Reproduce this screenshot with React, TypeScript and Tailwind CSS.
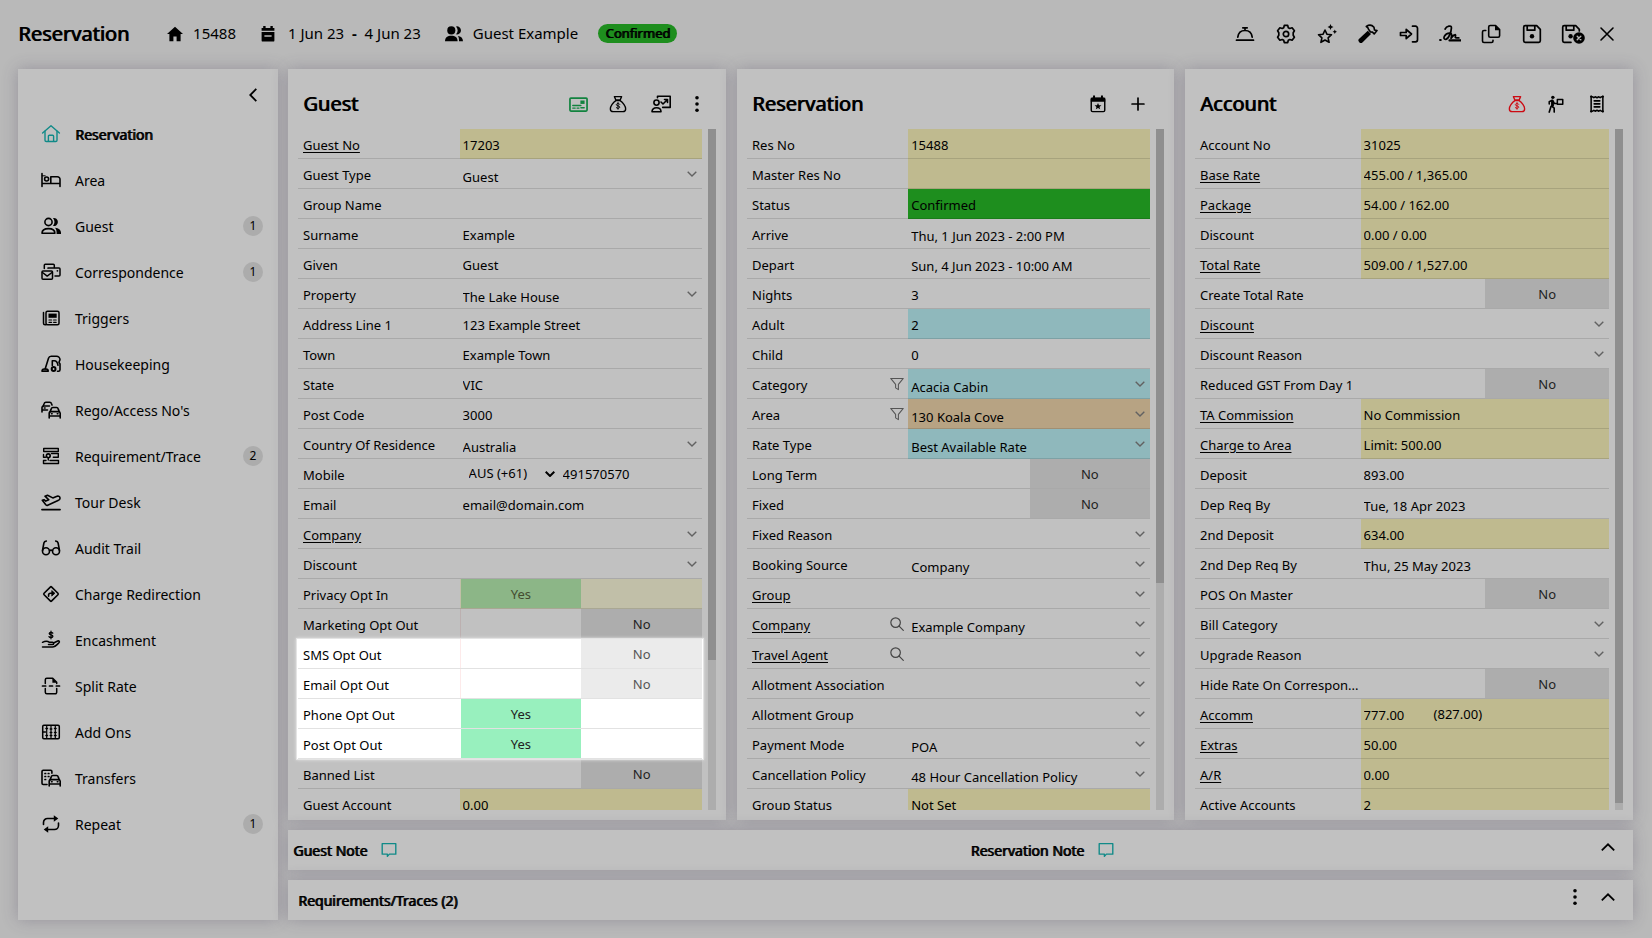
import React, { useId, useState } from 'react';
import clsx from 'clsx';

/* ---------- icons ---------- */

interface IconProps {
  className?: string;
  stroke?: number;
  children: React.ReactNode;
}

const Icon: React.FC<IconProps> = ({ className = 'size-5', stroke = 1.4, children }) => (
  <svg
    viewBox="0 0 20 20"
    className={clsx('shrink-0', className)}
    fill="none"
    stroke="currentColor"
    strokeWidth={stroke}
    strokeLinecap="round"
    strokeLinejoin="round"
    aria-hidden="true"
  >
    {children}
  </svg>
);

const solid = { fill: 'currentColor', stroke: 'none' };

const HomeOutline = () => (
  <Icon className="size-5 text-[#108a88]">
    <path d="M1.6 9 10 1.8 18.4 9" />
    <path d="M4 7.2v9a1.3 1.3 0 0 0 1.3 1.3h9.4a1.3 1.3 0 0 0 1.3-1.3v-9" />
    <path d="M7.4 17.3v-5a1 1 0 0 1 1-1h3.2a1 1 0 0 1 1 1v5" />
  </Icon>
);

const Bed = () => (
  <Icon stroke={1.6}>
    <path d="M1 3.5v13M1 13.5h18M19 16.5V9.3a2.6 2.6 0 0 0-2.6-2.6H9.8v6.6" />
    <circle cx="5.6" cy="9" r="2" />
    <path d="M1.2 5.8h3" strokeWidth={1} />
  </Icon>
);

const People = () => (
  <Icon stroke={1.6}>
    <circle cx="7.5" cy="6" r="3.6" />
    <path d="M1 17.3c0-3 2.6-4.7 6.5-4.7s6.4 1.7 6.4 4.7z" />
    <path d="M12 2.1a4 4 0 1 1 0 7.8 6.4 6.4 0 0 0 0-7.8z" {...solid} />
    <path d="M14 11.7c3.6.3 6 2.3 6 5v1.4h-4.4c.2-2.6-.2-4.8-1.6-6.4z" {...solid} />
  </Icon>
);

const Letters = () => (
  <Icon stroke={1.5}>
    <rect x="1" y="9" width="10.5" height="8.3" rx="1" />
    <path d="m1.5 10.5 4.700 3.600 4.800-3.600" />
    <path d="M3.300 6.500V3.200a1 1 0 0 1 1-1h8a1 1 0 0 1 1 1v2.300" />
    <path d="M7 6.300V6h11a1 1 0 0 1 1 1v6a1 1 0 0 1-1 1h-4" />
    <circle cx="16.400" cy="8.800" r="0.900" {...solid} />
  </Icon>
);

const Newspaper = () => (
  <Icon stroke={1.5}>
    <rect x="5" y="3.2" width="13" height="13.6" rx="1.5" />
    <path d="M5 16.8H4a1.5 1.5 0 0 1-1.5-1.5V4.6" />
    <rect x="7.500" y="5.600" width="8.200" height="4.200" {...solid} />
    <path d="M8 12h2.600M12.600 12h2.600M8 14.300h2.600M12.600 14.300h2.600" strokeWidth={1.2} />
  </Icon>
);

const Vacuum = () => (
  <Icon stroke={1.6}>
    <path d="M1 17.300c0-1.600.8-2.300 2.200-2.300h2c1.200 0 2 .8 2 2.300z" fill="currentColor" fillOpacity={0.5} />
    <path d="M4.300 14.600 7.500 4.300a2.800 2.800 0 0 1 2.700-2H15.500A3.500 3.500 0 0 1 19 5.800l-1 2.500 1 1.700v5.800a1.500 1.500 0 0 1-1.500 1.500h-1" />
    <path d="M11.300 11.500V6.800h2c2 0 3.200 1.500 3.700 4.500" />
    <circle cx="12.600" cy="15" r="1.900" strokeWidth={2} />
  </Icon>
);

const Car = () => (
  <>
    <path d="m9.200 11.600 1.100-3a1.600 1.600 0 0 1 1.500-1.100h3.800a1.600 1.600 0 0 1 1.500 1.100l1.100 3" />
    <path d="M8.200 18v-4.700a1.700 1.700 0 0 1 1.700-1.700h7.600a1.700 1.700 0 0 1 1.700 1.700V18M8.200 16h11" />
    <path d="M10.500 13.800h.6M16.300 13.800h.6" />
  </>
);

const Cars = () => (
  <Icon stroke={1.6}>
    <Car />
    <path d="m2.200 6 1.100-2.700a1.600 1.600 0 0 1 1.500-1.100h4a1.600 1.600 0 0 1 1.500 1.100l.7 1.700" />
    <path d="M1 12V7.700A1.700 1.700 0 0 1 2.700 6h5.800M1 10h5.500M3.300 8h.8" />
  </Icon>
);

const Checklist = () => (
  <Icon stroke={1.4}>
    <rect x="2.700" y="2.500" width="14.600" height="3" />
    <path d="M2.500 8.500v2.700h2M2.500 14.500h2.500M9 14.500h8.500M2.500 17.500h15M2.500 14.500v3M17.500 14.500v3" />
    <path d="M10.500 7.500H17.300v3.800h-5M14.500 11.300h-1" />
    <circle cx="7.300" cy="9.800" r="1.900" strokeWidth={1.600} />
    <path d="M7.300 14v-2" />
  </Icon>
);

const Takeoff = () => (
  <Icon stroke={1.600}>
    <path d="M1 17.600h18" strokeWidth={1.800} />
    <path d="M1.300 8.300 4.600 12.600c.5.700 1.400.9 2.100.6l10.300-4.600c1.300-.6 2.200-1.700 2-2.800-.3-1.500-2-2-3.600-1.400L11.800 5.900 6.500 3.200 4 4.200l3.800 3.600-3 1.300L3 7.700z" />
  </Icon>
);

const Spectacles = () => (
  <Icon stroke={1.600}>
    <circle cx="5" cy="13.200" r="3.500" />
    <circle cx="15" cy="13.200" r="3.500" />
    <path d="M1.500 12.500 2.900 5A2.400 2.400 0 0 1 5.300 3.100M18.500 12.500 17.100 5a2.400 2.400 0 0 0-2.400-1.900M8.500 12.700c1-.7 2-.7 3 0" />
  </Icon>
);

const TurnRight = () => (
  <Icon stroke={1.600}>
    <rect x="4.600" y="4.600" width="10.800" height="10.800" rx="1" transform="rotate(45 10 10)" />
    <path d="M7.600 12.300v-1.200a1.800 1.800 0 0 1 1.800-1.800h2.800" />
    <path d="m11 6.800 2.900 2.500L11 11.800z" fill="currentColor" strokeWidth={0.8} />
  </Icon>
);

const Encash = () => (
  <Icon stroke={1.500}>
    <path d="M11.800 3.200c-.4-.6-1-.9-1.800-.9-1 0-1.800.5-1.800 1.300 0 1.800 3.700.8 3.700 2.600 0 .9-.8 1.400-1.900 1.400-.9 0-1.600-.3-2-1M10 1.200v7.600" strokeWidth={1.3} />
    <path d="M1.500 12.300c3-1.700 5-1.600 7 0h3c1.600 0 1.500 2.300 0 2.300H7.500" />
    <path d="M12.500 13 16.700 11c1.300-.5 2.300.8 1.300 1.700-2.300 2.300-4 4.300-6.500 4.300H1.500" />
  </Icon>
);

const SplitDoc = () => (
  <Icon stroke={1.500}>
    <path d="M4.300 7.600V3.700A1.500 1.500 0 0 1 5.800 2.200h5.900l4 4v1.400M4.300 12.400v3.900a1.500 1.500 0 0 0 1.500 1.500h8.400a1.500 1.500 0 0 0 1.500-1.500v-3.900" />
    <path d="M11.400 2v4.700h4.600z" {...solid} />
    <path d="M1.500 10h3.200M8.500 10h3M15.300 10h3.200" strokeWidth={1.7} />
  </Icon>
);

const Abacus = () => (
  <Icon stroke={1.500}>
    <rect x="1.700" y="3.300" width="16.600" height="13.400" rx="1.200" />
    <path d="M5.700 3.500v13M10 3.500v13M14.300 3.500v13" strokeWidth={1.2} />
    <path d="M4.900 6.500h1.600M4.900 13.500h1.600M9.200 7h1.600M9.200 10.500h1.600M9.200 13.500h1.600M13.500 6.500h1.600M13.500 10.500h1.600M13.500 13.500h1.600M2 10h2.500" strokeWidth={1.4} />
  </Icon>
);

const Transfer = () => (
  <Icon stroke={1.600}>
    <Car />
    <path d="M6 16.500H2.200A1.200 1.200 0 0 1 1 15.300V3.400a1.200 1.200 0 0 1 1.200-1.200h7.500a1.200 1.200 0 0 1 1.200 1.200v1.800" />
    <path d="M4 5.500h.6M7.300 5.500h.6M4 8.500h.6M7.300 8.500h.6M4 11.500h.6" strokeWidth={1.7} />
  </Icon>
);

const RepeatArrows = () => (
  <Icon stroke={1.600}>
    <path d="M2.500 10.500V8.500a4 4 0 0 1 4-4H13M17.500 9v2.500a4 4 0 0 1-4 4H7" />
    <path d="M12.800 1.300 17.300 4.500l-4.500 3.200zM7.200 12.300l-4.500 3.200 4.500 3.200z" {...solid} />
  </Icon>
);

const MoneyBag: React.FC<{ className?: string }> = ({ className }) => (
  <Icon className={clsx('size-[18px]', className)} stroke={1.5}>
    <path d="M6 1.800h8l-1.600 3.800H7.600z" />
    <path d="M7.600 6.300C4.600 8.300 1.500 12.500 1.500 15.500c0 2 1.300 3 3.200 3h10.600c1.900 0 3.200-1 3.200-3 0-3-3.100-7.200-6.100-9.200z" />
    <path d="M11.900 10.300c-.4-.6-1-.8-1.900-.8-1 0-1.800.4-1.800 1.300 0 1.800 3.700.8 3.700 2.600 0 .9-.8 1.400-1.900 1.400-.9 0-1.600-.3-2-.9M10 8.400v7.400" strokeWidth={1.1} />
  </Icon>
);

const KebabDots = () => (
  <Icon className="size-[18px]">
    <circle cx="10" cy="3" r="2" {...solid} />
    <circle cx="10" cy="10" r="2" {...solid} />
    <circle cx="10" cy="17" r="2" {...solid} />
  </Icon>
);

const IdCard = () => (
  <Icon className="size-[19px] text-[#12833f]" stroke={1.8}>
    <rect x="1" y="3.300" width="18" height="13.600" rx="1" />
    <rect x="12" y="5.800" width="4.400" height="3.600" {...solid} />
    <path d="M4 11h8.500M4 13.800h2.500M8.500 13.800h2M12.500 13.500h3.500" strokeWidth={1.5} />
  </Icon>
);

const Presenter = () => (
  <Icon stroke={1.6}>
    <path d="M6.500 3.800V2.200h12.700v11.200h-7.500" />
    <circle cx="5.500" cy="8.600" r="2.600" />
    <path d="M1 17.800c0-2.700 1.700-4 4.500-4s4.500 1.300 4.500 4z" />
    <path d="m10 8 2 2 4-4M13.500 5.500h3v3" />
  </Icon>
);

const CalendarStar = () => (
  <Icon className="size-[18px]" stroke={1.6}>
    <rect x="2.500" y="3.500" width="15" height="15" rx="1.500" />
    <path d="M2 3h16v4.500H2zM4.500.5h2.200V4H4.500zM13.300.5h2.200V4h-2.200z" {...solid} />
    <path d="m10 8.800 1.100 2.500 2.700.2-2.100 1.800.7 2.600-2.400-1.400-2.400 1.400.7-2.600-2.100-1.800 2.700-.2z" {...solid} />
  </Icon>
);

const PlusSign = () => (
  <Icon className="size-3.5" stroke={2.4}>
    <path d="M10 1.500v17M1.500 10h17" />
  </Icon>
);

const Porter = () => (
  <Icon className="size-[18px]" stroke={1.8}>
    <circle cx="6.500" cy="2.600" r="1.900" {...solid} />
    <rect x="11.500" y="5" width="6" height="5.300" strokeWidth={1.7} />
    <path d="M2.500 10V7.500L5.300 6h1l2 3.500H11" />
    <path d="M4.500 6.500h3.200v6H4.500z" {...solid} />
    <path d="M4.500 12.500 2.500 19M5.500 12.500 8 14.500V19" />
  </Icon>
);

const Receipt = () => (
  <Icon className="size-[18px]" stroke={1.7}>
    <path d="M3.500 1v18M16.500 1v18" />
    <path d="M3 2h2l1.500 1L8 2l2 1 2-1 1.500 1L15 2h2M3 18h2l1.500-1L8 18l2-1 2 1 1.500-1 1.500 1h2" />
    <path d="M7 6.500h6M7 9.800h6M7 13.100h6" strokeWidth={2} />
  </Icon>
);

const Bell = () => (
  <Icon stroke={1.7}>
    <path d="M1.500 16.200h17" />
    <path d="M2.800 13.200C3.300 9 6.200 6.500 10 6.500s6.700 2.500 7.200 6.700M10 6.500V4.200M7.800 3.800h4.400" />
  </Icon>
);

const Gear = () => (
  <Icon stroke={1.7}>
    <path d="M8.300 1.400h3.400l.6 2.300 1.500.8 2.300-.7 2.300 3-1.200 2v2.400l1.200 2-2.300 3-2.300-.7-1.500.8-.6 2.300H8.300l-.6-2.300-1.500-.8-2.300.7-2.300-3 1.200-2V8.800l-1.200-2 2.300-3 2.300.7 1.500-.8z" />
    <circle cx="10" cy="10" r="2.700" />
  </Icon>
);

const StarSparkle = () => (
  <Icon stroke={1.6}>
    <path d="m8 6 1.900 4.200 4.600.5-3.400 3.100 1 4.500L8 16l-4.100 2.300 1-4.500-3.400-3.100 4.600-.5z" />
    <path d="m13.500 0 .9 2.100 2.100.9-2.100.9-.9 2.100-.9-2.100-2.100-.9 2.100-.9zM17.800 5.500l.7 1.500 1.500.7-1.500.7-.7 1.500-.7-1.500-1.500-.7 1.500-.7z" {...solid} />
  </Icon>
);

const Hammer = () => (
  <Icon stroke={1.6}>
    <path d="M9.800 6.800.9 14.900c-1.500 1.600.8 5 3 4L13 10z" {...solid} />
    <path d="M8.300 2.500C11 .7 14 1 16 3.300l.5 2.700 2.500.6-2.800 3.400-1.700-1.900-2-.2-2-2.700c-.1-1-.9-1.900-2.200-2.700z" />
  </Icon>
);

const SignIn = () => (
  <Icon stroke={1.7}>
    <path d="M13.500 2.200h3a2 2 0 0 1 2 2v11.600a2 2 0 0 1-2 2h-3" />
    <path d="M1.500 8.500h5.700V5.400l5.300 4.600-5.300 4.600v-3.100H1.500z" />
  </Icon>
);

const Signature = () => (
  <Icon className="size-[22px]" stroke={1.6}>
    <path d="M5.500 5.500C6.800 2.600 11.500 1.600 11.300 4.500c-.2 3.800-2.600 10.400-5.300 10.400-3 0-1.300-5.200 3.700-5.600 2.600-.2 1.800 2.400 1.300 4.700 1.500-2.500 3.600-4 4-3s-1.200 2.600 1 2.600h2" />
    <path d="M9.500 15.800H20M1 15.500h.6" strokeWidth={1.9} />
  </Icon>
);

const CopyPages = () => (
  <Icon stroke={1.6}>
    <path d="M9.200 1.500h5.400l4 4v6.300a1.500 1.500 0 0 1-1.500 1.500H9.200a1.500 1.500 0 0 1-1.500-1.500V3a1.500 1.500 0 0 1 1.500-1.500z" />
    <path d="M14 1.300v4.900h4.900z" {...solid} />
    <path d="M4.800 6.500H3A1.500 1.500 0 0 0 1.500 8v9A1.500 1.500 0 0 0 3 18.500h7.500A1.500 1.500 0 0 0 12 17v-.7" />
  </Icon>
);

const Disk = () => (
  <Icon stroke={1.7}>
    <path d="M1.700 3.200a1.500 1.500 0 0 1 1.500-1.500h11.500l3.600 3.600v11.500a1.500 1.500 0 0 1-1.500 1.500H3.200a1.500 1.500 0 0 1-1.500-1.500z" />
    <path d="M5.200 2v4.200h7.600V2" />
    <circle cx="10" cy="12.300" r="2.200" {...solid} />
  </Icon>
);

const DiskClose = () => (
  <svg viewBox="0 0 24 20" className="h-5 w-6" fill="none" stroke="currentColor" strokeWidth="1.7" strokeLinecap="round" strokeLinejoin="round" aria-hidden="true">
    <path d="M10 18.300H3.200a1.500 1.500 0 0 1-1.500-1.500V3.200a1.500 1.500 0 0 1 1.500-1.500h11.500l3.600 3.600V7" />
    <path d="M5.200 2v4.200h7.600V2" />
    <circle cx="9.600" cy="12.300" r="2.200" {...solid} />
    <circle cx="18" cy="14" r="5.800" {...solid} />
    <path d="m16.200 12.200 3.600 3.600M19.800 12.200l-3.600 3.600" stroke="#b9b9b9" strokeWidth="1.4" />
  </svg>
);

const Cross = () => (
  <Icon className="size-4" stroke={2}>
    <path d="M2.500 2.500l15 15M17.500 2.500l-15 15" />
  </Icon>
);

const Speech = () => (
  <Icon className="size-4 text-[#108a88]" stroke={1.7}>
    <path d="M1.500 2h17v13.200H10.500L8 18v-2.800H1.500z" />
  </Icon>
);

const ChevronDown: React.FC<{ bold?: boolean }> = ({ bold }) => (
  <svg
    viewBox="0 0 10 6"
    className={clsx('h-1.5 w-2.5', bold ? 'text-black' : 'text-[#626262]')}
    fill="none"
    stroke="currentColor"
    strokeWidth={bold ? 2 : 1.4}
    aria-hidden="true"
  >
    <path d="M.7.7 5 5 9.300.7" />
  </svg>
);

const ChevronUp = () => (
  <svg viewBox="0 0 14 8" className="h-2 w-3.5" fill="none" stroke="currentColor" strokeWidth="1.8" aria-hidden="true">
    <path d="m.8 7.300 6.200-6 6.200 6" />
  </svg>
);

const Funnel = () => (
  <Icon className="size-3.5 text-[#555]" stroke={1.5}>
    <path d="M1 2h18l-7 8.500V18l-4-2.500v-5z" />
  </Icon>
);

const Magnifier = () => (
  <Icon className="size-3.5 text-[#444]" stroke={1.7}>
    <circle cx="8" cy="8" r="6.800" />
    <path d="m13 13 6 6" />
  </Icon>
);

/* ---------- fields ---------- */

type Kind = 'text' | 'date' | 'select' | 'toggle' | 'phone';
type Tone = 'yellow' | 'pale' | 'green' | 'blue' | 'tan';

interface Field {
  label: string;
  value?: string;
  extra?: string;
  kind?: Kind;
  tone?: Tone;
  link?: boolean;
  tool?: 'filter' | 'search';
  edged?: boolean;
}

const TONE_MAP: Record<Tone, string> = {
  yellow: 'bg-[#bfba8f]',
  pale: 'bg-[#c1bfa8]',
  green: 'bg-[#1e8e1e]',
  blue: 'bg-[#8fb8bc]',
  tan: 'bg-[#b7a383]',
};

const Toggle: React.FC<{ id: string; field: Field; lit?: boolean }> = ({ id, field, lit }) => {
  const [on, setOn] = useState(field.value === 'Yes');
  const faded = field.tone === 'pale';
  return (
    <button
      id={id}
      type="button"
      role="switch"
      aria-checked={on}
      onClick={() => setOn(!on)}
      className={clsx('grid h-full w-full grid-cols-2 border-l', field.edged ? (lit ? 'border-[#fdeaea]' : 'border-[#bcb0b0]') : 'border-transparent')}
    >
      <span
        className={clsx(
          'flex items-center justify-center pt-0.5',
          on && (lit ? 'bg-[#98f0be] text-[#222]' : 'bg-[#8cb687] text-[#444d30]'),
        )}
      >
        {on ? 'Yes' : ''}
      </span>
      <span
        className={clsx(
          'flex items-center justify-center pt-0.5',
          !on && (lit ? 'bg-[#ebebeb] text-[#555]' : 'bg-[#adadad] text-[#222]'),
          faded && TONE_MAP.pale,
        )}
      >
        {on ? '' : 'No'}
      </span>
    </button>
  );
};

const Control: React.FC<{ id: string; field: Field; lit?: boolean }> = ({ id, field, lit }) => {
  const { kind = 'text', value = '', tone, extra } = field;

  if (kind === 'toggle') return <Toggle id={id} field={field} lit={lit} />;

  if (kind === 'select') {
    return (
      <div className="relative flex h-full items-center">
        <select id={id} className="h-full w-full appearance-none bg-transparent pt-2 pr-6 pl-[3px] outline-none">
          <option>{value}</option>
        </select>
        <span className="pointer-events-none absolute right-[5px]">
          <ChevronDown />
        </span>
      </div>
    );
  }

  if (kind === 'phone') {
    return (
      <div className="flex h-full items-center pl-[3px]">
        <div className="relative flex h-full w-[100px] items-center">
          <select aria-label="Country code" className="h-full w-full appearance-none bg-transparent pl-1.5 outline-none">
            <option>{extra}</option>
          </select>
          <span className="pointer-events-none absolute right-2">
            <ChevronDown bold />
          </span>
        </div>
        <input id={id} type="tel" defaultValue={value} className="h-full min-w-0 flex-1 bg-transparent outline-none" />
      </div>
    );
  }

  return (
    <div className={clsx('flex h-full pl-[3px]', kind === 'date' ? 'pt-1' : 'pt-0.5')}>
      <input
        id={id}
        type="text"
        defaultValue={value}
        readOnly={tone === 'yellow' || tone === 'green'}
        className={clsx('h-full min-w-0 bg-transparent outline-none', extra ? 'w-[70px]' : 'w-full')}
      />
      {extra && <span className="flex items-center">{extra}</span>}
    </div>
  );
};

const FieldRow: React.FC<{ field: Field; lit?: boolean }> = ({ field, lit }) => {
  const id = useId();
  const line = lit ? 'border-[#e2e2e2]' : 'border-black/12';
  return (
    <div className="flex h-[30px] shrink-0">
      <div className={clsx('flex w-2/5 items-center justify-between border-b pr-1 pl-[5px]', line)}>
        <label htmlFor={id} className="pt-1 whitespace-nowrap">
          {field.link ? (
            <a href="#" className="underline underline-offset-2">
              {field.label}
            </a>
          ) : (
            field.label
          )}
        </label>
        {field.tool && (
          <button type="button" aria-label={`${field.tool} ${field.label}`}>
            {field.tool === 'filter' ? <Funnel /> : <Magnifier />}
          </button>
        )}
      </div>
      <div className={clsx('w-3/5 border-b', line, field.tone && TONE_MAP[field.tone])}>
        <Control id={id} field={field} lit={lit} />
      </div>
    </div>
  );
};

const rows = (fields: Field[], lit = false) => fields.map((f, i) => <FieldRow key={i} field={f} lit={lit} />);

/* ---------- data ---------- */

const GUEST_FIELDS: Field[] = [
  { label: 'Guest No', value: '17203', tone: 'yellow', link: true },
  { label: 'Guest Type', value: 'Guest', kind: 'select' },
  { label: 'Group Name' },
  { label: 'Surname', value: 'Example' },
  { label: 'Given', value: 'Guest' },
  { label: 'Property', value: 'The Lake House', kind: 'select' },
  { label: 'Address Line 1', value: '123 Example Street' },
  { label: 'Town', value: 'Example Town' },
  { label: 'State', value: 'VIC' },
  { label: 'Post Code', value: '3000' },
  { label: 'Country Of Residence', value: 'Australia', kind: 'select' },
  { label: 'Mobile', value: '491570570', extra: 'AUS (+61)', kind: 'phone' },
  { label: 'Email', value: 'email@domain.com' },
  { label: 'Company', kind: 'select', link: true },
  { label: 'Discount', kind: 'select' },
  { label: 'Privacy Opt In', value: 'Yes', kind: 'toggle', tone: 'pale' },
  { label: 'Marketing Opt Out', value: 'No', kind: 'toggle', edged: true },
];

const OPT_OUT_FIELDS: Field[] = [
  { label: 'SMS Opt Out', value: 'No', kind: 'toggle', edged: true },
  { label: 'Email Opt Out', value: 'No', kind: 'toggle', edged: true },
  { label: 'Phone Opt Out', value: 'Yes', kind: 'toggle' },
  { label: 'Post Opt Out', value: 'Yes', kind: 'toggle' },
];

const GUEST_TAIL: Field[] = [
  { label: 'Banned List', value: 'No', kind: 'toggle' },
  { label: 'Guest Account', value: '0.00', tone: 'yellow' },
];

const RESERVATION_FIELDS: Field[] = [
  { label: 'Res No', value: '15488', tone: 'yellow' },
  { label: 'Master Res No', tone: 'yellow' },
  { label: 'Status', value: 'Confirmed', tone: 'green' },
  { label: 'Arrive', value: 'Thu, 1 Jun 2023 - 2:00 PM', kind: 'date' },
  { label: 'Depart', value: 'Sun, 4 Jun 2023 - 10:00 AM', kind: 'date' },
  { label: 'Nights', value: '3' },
  { label: 'Adult', value: '2', tone: 'blue' },
  { label: 'Child', value: '0' },
  { label: 'Category', value: 'Acacia Cabin', kind: 'select', tone: 'blue', tool: 'filter' },
  { label: 'Area', value: '130 Koala Cove', kind: 'select', tone: 'tan', tool: 'filter' },
  { label: 'Rate Type', value: 'Best Available Rate', kind: 'select', tone: 'blue' },
  { label: 'Long Term', value: 'No', kind: 'toggle' },
  { label: 'Fixed', value: 'No', kind: 'toggle' },
  { label: 'Fixed Reason', kind: 'select' },
  { label: 'Booking Source', value: 'Company', kind: 'select' },
  { label: 'Group', kind: 'select', link: true },
  { label: 'Company', value: 'Example Company', kind: 'select', link: true, tool: 'search' },
  { label: 'Travel Agent', kind: 'select', link: true, tool: 'search' },
  { label: 'Allotment Association', kind: 'select' },
  { label: 'Allotment Group', kind: 'select' },
  { label: 'Payment Mode', value: 'POA', kind: 'select' },
  { label: 'Cancellation Policy', value: '48 Hour Cancellation Policy', kind: 'select' },
  { label: 'Group Status', value: 'Not Set', tone: 'yellow' },
];

const ACCOUNT_FIELDS: Field[] = [
  { label: 'Account No', value: '31025', tone: 'yellow' },
  { label: 'Base Rate', value: '455.00 / 1,365.00', tone: 'yellow', link: true },
  { label: 'Package', value: '54.00 / 162.00', tone: 'yellow', link: true },
  { label: 'Discount', value: '0.00 / 0.00', tone: 'yellow' },
  { label: 'Total Rate', value: '509.00 / 1,527.00', tone: 'yellow', link: true },
  { label: 'Create Total Rate', value: 'No', kind: 'toggle' },
  { label: 'Discount', kind: 'select', link: true },
  { label: 'Discount Reason', kind: 'select' },
  { label: 'Reduced GST From Day 1', value: 'No', kind: 'toggle' },
  { label: 'TA Commission', value: 'No Commission', tone: 'yellow', link: true },
  { label: 'Charge to Area', value: 'Limit: 500.00', tone: 'yellow', link: true },
  { label: 'Deposit', value: '893.00' },
  { label: 'Dep Req By', value: 'Tue, 18 Apr 2023', kind: 'date' },
  { label: '2nd Deposit', value: '634.00', tone: 'yellow' },
  { label: '2nd Dep Req By', value: 'Thu, 25 May 2023', kind: 'date' },
  { label: 'POS On Master', value: 'No', kind: 'toggle' },
  { label: 'Bill Category', kind: 'select' },
  { label: 'Upgrade Reason', kind: 'select' },
  { label: 'Hide Rate On Correspon...', value: 'No', kind: 'toggle' },
  { label: 'Accomm', value: '777.00', extra: '(827.00)', tone: 'yellow', link: true },
  { label: 'Extras', value: '50.00', tone: 'yellow', link: true },
  { label: 'A/R', value: '0.00', tone: 'yellow', link: true },
  { label: 'Active Accounts', value: '2', tone: 'yellow' },
];

const NAV_ITEMS: { label: string; icon: React.ReactNode; count?: number }[] = [
  { label: 'Reservation', icon: <HomeOutline /> },
  { label: 'Area', icon: <Bed /> },
  { label: 'Guest', icon: <People />, count: 1 },
  { label: 'Correspondence', icon: <Letters />, count: 1 },
  { label: 'Triggers', icon: <Newspaper /> },
  { label: 'Housekeeping', icon: <Vacuum /> },
  { label: "Rego/Access No's", icon: <Cars /> },
  { label: 'Requirement/Trace', icon: <Checklist />, count: 2 },
  { label: 'Tour Desk', icon: <Takeoff /> },
  { label: 'Audit Trail', icon: <Spectacles /> },
  { label: 'Charge Redirection', icon: <TurnRight /> },
  { label: 'Encashment', icon: <Encash /> },
  { label: 'Split Rate', icon: <SplitDoc /> },
  { label: 'Add Ons', icon: <Abacus /> },
  { label: 'Transfers', icon: <Transfer /> },
  { label: 'Repeat', icon: <RepeatArrows />, count: 1 },
];

const ACTIONS: { label: string; icon: React.ReactNode }[] = [
  { label: 'Service', icon: <Bell /> },
  { label: 'Settings', icon: <Gear /> },
  { label: 'Favourite', icon: <StarSparkle /> },
  { label: 'Maintenance', icon: <Hammer /> },
  { label: 'Check in', icon: <SignIn /> },
  { label: 'Sign', icon: <Signature /> },
  { label: 'Copy', icon: <CopyPages /> },
  { label: 'Save', icon: <Disk /> },
  { label: 'Save and close', icon: <DiskClose /> },
];

/* ---------- layout ---------- */

const CARD = 'bg-[#c1c1c1] shadow-[0_0_15px_rgba(70,60,90,0.3)]';
// regular weight thickened by a second strike
const HEAVY = '[text-shadow:1px_0_0_currentColor]';

const IconButton: React.FC<{ label: string; className?: string; children: React.ReactNode }> = ({ label, className, children }) => (
  <button type="button" aria-label={label} className={clsx('flex items-center justify-center', className)}>
    {children}
  </button>
);

interface PanelProps {
  title: string;
  tools: React.ReactNode;
  thumb: string;
  children: React.ReactNode;
}

const Panel: React.FC<PanelProps> = ({ title, tools, thumb, children }) => (
  <section className={clsx('flex min-h-0 min-w-0 flex-col pb-2.5', CARD)}>
    <div className="flex h-[60px] shrink-0 items-center justify-between pt-2.5 pr-4 pl-[15px]">
      <h2 className={clsx('text-[20px]', HEAVY)}>{title}</h2>
      <div className="flex items-center">{tools}</div>
    </div>
    <div className="flex min-h-0 flex-1 pr-2.5">
      <div className="min-w-0 flex-1 overflow-hidden pr-1.5 pl-2.5">{children}</div>
      <div className="w-2 bg-[#adadad]">
        <div className={clsx('bg-[#8f8f8f]', thumb)} />
      </div>
    </div>
  </section>
);

export default function App() {
  return (
    <div className="flex h-screen flex-col bg-[#b9b9b9] pr-[19px] pb-[18px] pl-[18px] font-['Noto_Sans',sans-serif] text-[13px] text-black">
      <header className="flex h-[69px] shrink-0 items-center justify-between pr-3 pb-0.5 text-[15px]">
        <div className="flex items-center">
          <h1 className={clsx('text-[20px]', HEAVY)}>Reservation</h1>
          <Icon className="ml-[38px] size-4">
            <path d="M10 1 0 10h3v9h5v-6h4v6h5v-9h3z" {...solid} />
          </Icon>
          <span className="ml-2.5">15488</span>
          <Icon className="ml-6 size-4">
            <path d="M2 2.500h2V0h3v2.500h6V0h3v2.500h2V6H2zM2 7.500h16V18a1.500 1.500 0 0 1-1.500 1.500h-13A1.500 1.500 0 0 1 2 18zM5.500 11.500v2h9v-2z" fillRule="evenodd" {...solid} />
          </Icon>
          <span className="ml-3 whitespace-pre">1 Jun 23  <b>-</b>  4 Jun 23</span>
          <Icon className="ml-6 size-[18px]">
            <circle cx="7" cy="6" r="4.500" {...solid} />
            <path d="M0 18c0-4 2.800-6 7-6s7 2 7 6z" {...solid} />
            <path d="M12.300 1.600a4.500 4.500 0 1 1 0 8.800 7 7 0 0 0 0-8.800zM14.300 12.200c3.500.4 5.700 2.400 5.700 5.800h-4.400c0-2.400-.2-4.200-1.300-5.800z" {...solid} />
          </Icon>
          <span className="ml-2.5">Guest Example</span>
          <span className={clsx('ml-5 flex h-[19px] items-center rounded-full bg-[#1e8e1e] px-[7px] text-[13px]', HEAVY)}>Confirmed</span>
        </div>
        <div className="flex items-center">
          {ACTIONS.map(a => (
            <IconButton key={a.label} label={a.label} className="w-[41px]">
              {a.icon}
            </IconButton>
          ))}
          <IconButton label="Close" className="w-7">
            <Cross />
          </IconButton>
        </div>
      </header>

      <div className="flex min-h-0 flex-1 gap-2.5">
        <nav className={clsx('w-[260px] shrink-0 text-[14px]', CARD)}>
          <div className="flex h-[42px] items-center justify-end pt-2.5 pr-[21px]">
            <IconButton label="Collapse menu">
              <svg viewBox="0 0 8 14" className="h-3.5 w-2" fill="none" stroke="currentColor" strokeWidth="1.8" aria-hidden="true">
                <path d="M7.300.8 1.200 7l6.100 6.200" />
              </svg>
            </IconButton>
          </div>
          <ul>
            {NAV_ITEMS.map((item, i) => (
              <li key={item.label}>
                <a href="#" className="flex h-[46px] items-center pr-[15px] pl-[23px]">
                  {item.icon}
                  <span className={clsx('ml-3.5 flex-1', i === 0 && HEAVY)}>{item.label}</span>
                  {item.count && (
                    <span className="flex size-5 items-center justify-center rounded-full bg-[#acacac] text-[12px]">{item.count}</span>
                  )}
                </a>
              </li>
            ))}
          </ul>
        </nav>

        <main className="flex min-w-0 flex-1 flex-col gap-2.5">
          <div className="grid min-h-0 flex-1 grid-cols-[438fr_437fr_448fr] gap-[11px]">
            <Panel
              title="Guest"
              thumb="h-[78%]"
              tools={
                <>
                  <IconButton label="Guest card" className="w-10"><IdCard /></IconButton>
                  <IconButton label="Guest account" className="w-10"><MoneyBag /></IconButton>
                  <IconButton label="Guest profile" className="w-[46px]"><Presenter /></IconButton>
                  <IconButton label="More" className="w-[26px]"><KebabDots /></IconButton>
                </>
              }
            >
              {rows(GUEST_FIELDS)}
              <div className="relative -mx-px bg-white px-px shadow-[0_0_0_1px_#e4e4e4,0_0_3px_1px_#e4e4e4]">
                {rows(OPT_OUT_FIELDS, true)}
              </div>
              {rows(GUEST_TAIL)}
            </Panel>
            <Panel
              title="Reservation"
              thumb="h-2/3"
              tools={
                <>
                  <IconButton label="Events" className="w-[41px]"><CalendarStar /></IconButton>
                  <IconButton label="Add" className="w-10"><PlusSign /></IconButton>
                </>
              }
            >
              {rows(RESERVATION_FIELDS)}
            </Panel>
            <Panel
              title="Account"
              thumb="h-[99%]"
              tools={
                <>
                  <IconButton label="Account balance" className="w-9 text-[#cc0a12]"><MoneyBag /></IconButton>
                  <IconButton label="Transfer" className="w-[41px]"><Porter /></IconButton>
                  <IconButton label="Receipt" className="w-[41px]"><Receipt /></IconButton>
                </>
              }
            >
              {rows(ACCOUNT_FIELDS)}
            </Panel>
          </div>

          <section className={clsx('grid h-10 shrink-0 grid-cols-2 items-center text-[14px]', CARD)}>
            <div className="flex items-center gap-3.5 pl-[5px]">
              <h3 className={HEAVY}>Guest Note</h3>
              <IconButton label="Edit guest note"><Speech /></IconButton>
            </div>
            <div className="flex items-center gap-3.5 pr-[18px] pl-2.5">
              <h3 className={HEAVY}>Reservation Note</h3>
              <IconButton label="Edit reservation note"><Speech /></IconButton>
              <IconButton label="Expand notes" className="ml-auto pb-1.5"><ChevronUp /></IconButton>
            </div>
          </section>

          <section className={clsx('flex h-10 shrink-0 items-center pr-[18px] pl-2.5 text-[14px]', CARD)}>
            <h3 className={clsx('flex-1', HEAVY)}>Requirements/Traces (2)</h3>
            <IconButton label="More" className="pb-1.5"><KebabDots /></IconButton>
            <IconButton label="Expand requirements" className="ml-[17px] pb-1.5"><ChevronUp /></IconButton>
          </section>
        </main>
      </div>
    </div>
  );
}
